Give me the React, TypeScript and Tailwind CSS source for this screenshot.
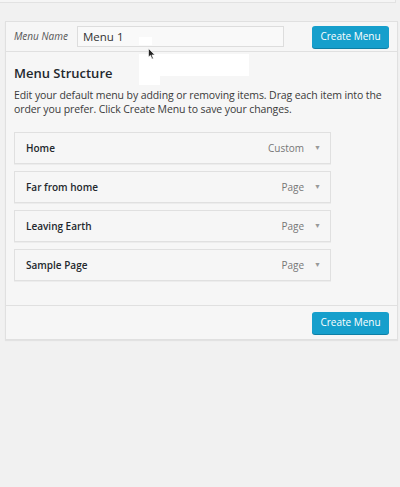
export default function App() {
  const items = [
    { title: 'Home', type: 'Custom' },
    { title: 'Far from home', type: 'Page' },
    { title: 'Leaving Earth', type: 'Page' },
    { title: 'Sample Page', type: 'Page' },
  ]

  return (
    <div className="relative w-[400px] h-[487px] bg-[#f1f1f1] font-['Open_Sans',sans-serif] text-[#444]">
      {/* previous box edge */}
      <div className="w-[396px] h-[3px] bg-[#f5f5f5] border-b border-r border-[#e2e2e2]"></div>

      <div className="mt-[18px] ml-[5px] w-[393px] bg-[#f6f6f6] border border-[#e0e0e0] shadow-[0_1px_1px_rgba(0,0,0,0.06)]">
        {/* header */}
        <div className="flex items-center h-[30px] pl-[8px] pr-[8px] border-b border-[#e0e0e0]">
          <span className="w-[63px] text-[10px] italic text-[#555]">Menu Name</span>
          <div className="w-[207px] h-[21px] flex items-center pl-[5px] bg-[#f9f9f9] border border-[#dddddd] text-[11.5px] text-[#333]">
            Menu 1
          </div>
          <button className="ml-auto w-[77px] h-[22px] rounded-[3px] bg-[#169fcc] text-white text-[10px] font-medium shadow-[0_1px_0_#0e7fa5]">
            Create Menu
          </button>
        </div>

        {/* body */}
        <div className="px-[8px] pt-[12px] pb-[24px] border-b border-[#e0e0e0]">
          <h3 className="text-[13px] font-semibold text-[#23282d] leading-[18px]">Menu Structure</h3>
          <p className="mt-[6px] text-[10.5px] leading-[14px] tracking-[-0.1px] text-[#3a3a3a]">
            Edit your default menu by adding or removing items. Drag each item into the order you prefer. Click Create Menu to save your changes.
          </p>
          <div className="mt-[16px] flex flex-col gap-[7px]">
            {items.map((item) => (
              <div
                key={item.title}
                className="w-[317px] h-[32px] flex items-center pl-[11px] pr-[9px] bg-[#f6f6f6] border border-[#e0e0e0] shadow-[0_1px_0_rgba(0,0,0,0.04)]"
              >
                <span className="text-[10px] font-semibold text-[#23282d]">{item.title}</span>
                <span className="ml-auto text-[10px] text-[#777]">{item.type}</span>
                <span className="ml-[10px] text-[7px] text-[#999]">▼</span>
              </div>
            ))}
          </div>
        </div>

        {/* footer */}
        <div className="flex justify-end h-[33px] items-center pr-[8px]">
          <button className="w-[77px] h-[22px] rounded-[3px] bg-[#169fcc] text-white text-[10px] font-medium shadow-[0_1px_0_#0e7fa5]">
            Create Menu
          </button>
        </div>
      </div>

      {/* screen-capture artefacts over the page */}
      <div className="absolute left-[139px] top-[37px] w-[13px] h-[8px] bg-white"></div>
      <div className="absolute left-[139px] top-[54px] w-[110px] h-[22px] bg-white"></div>
      <div className="absolute left-[139px] top-[76px] w-[21px] h-[9px] bg-white"></div>
      <svg className="absolute left-[148px] top-[48px]" width="8" height="12" viewBox="0 0 8 12">
        <path d="M0.5 0.5 L0.5 9 L2.5 7.3 L4 11 L5.3 10.4 L3.9 6.9 L6.8 6.9 Z" fill="#222" stroke="#fff" strokeWidth="0.6" />
      </svg>
    </div>
  )
}
